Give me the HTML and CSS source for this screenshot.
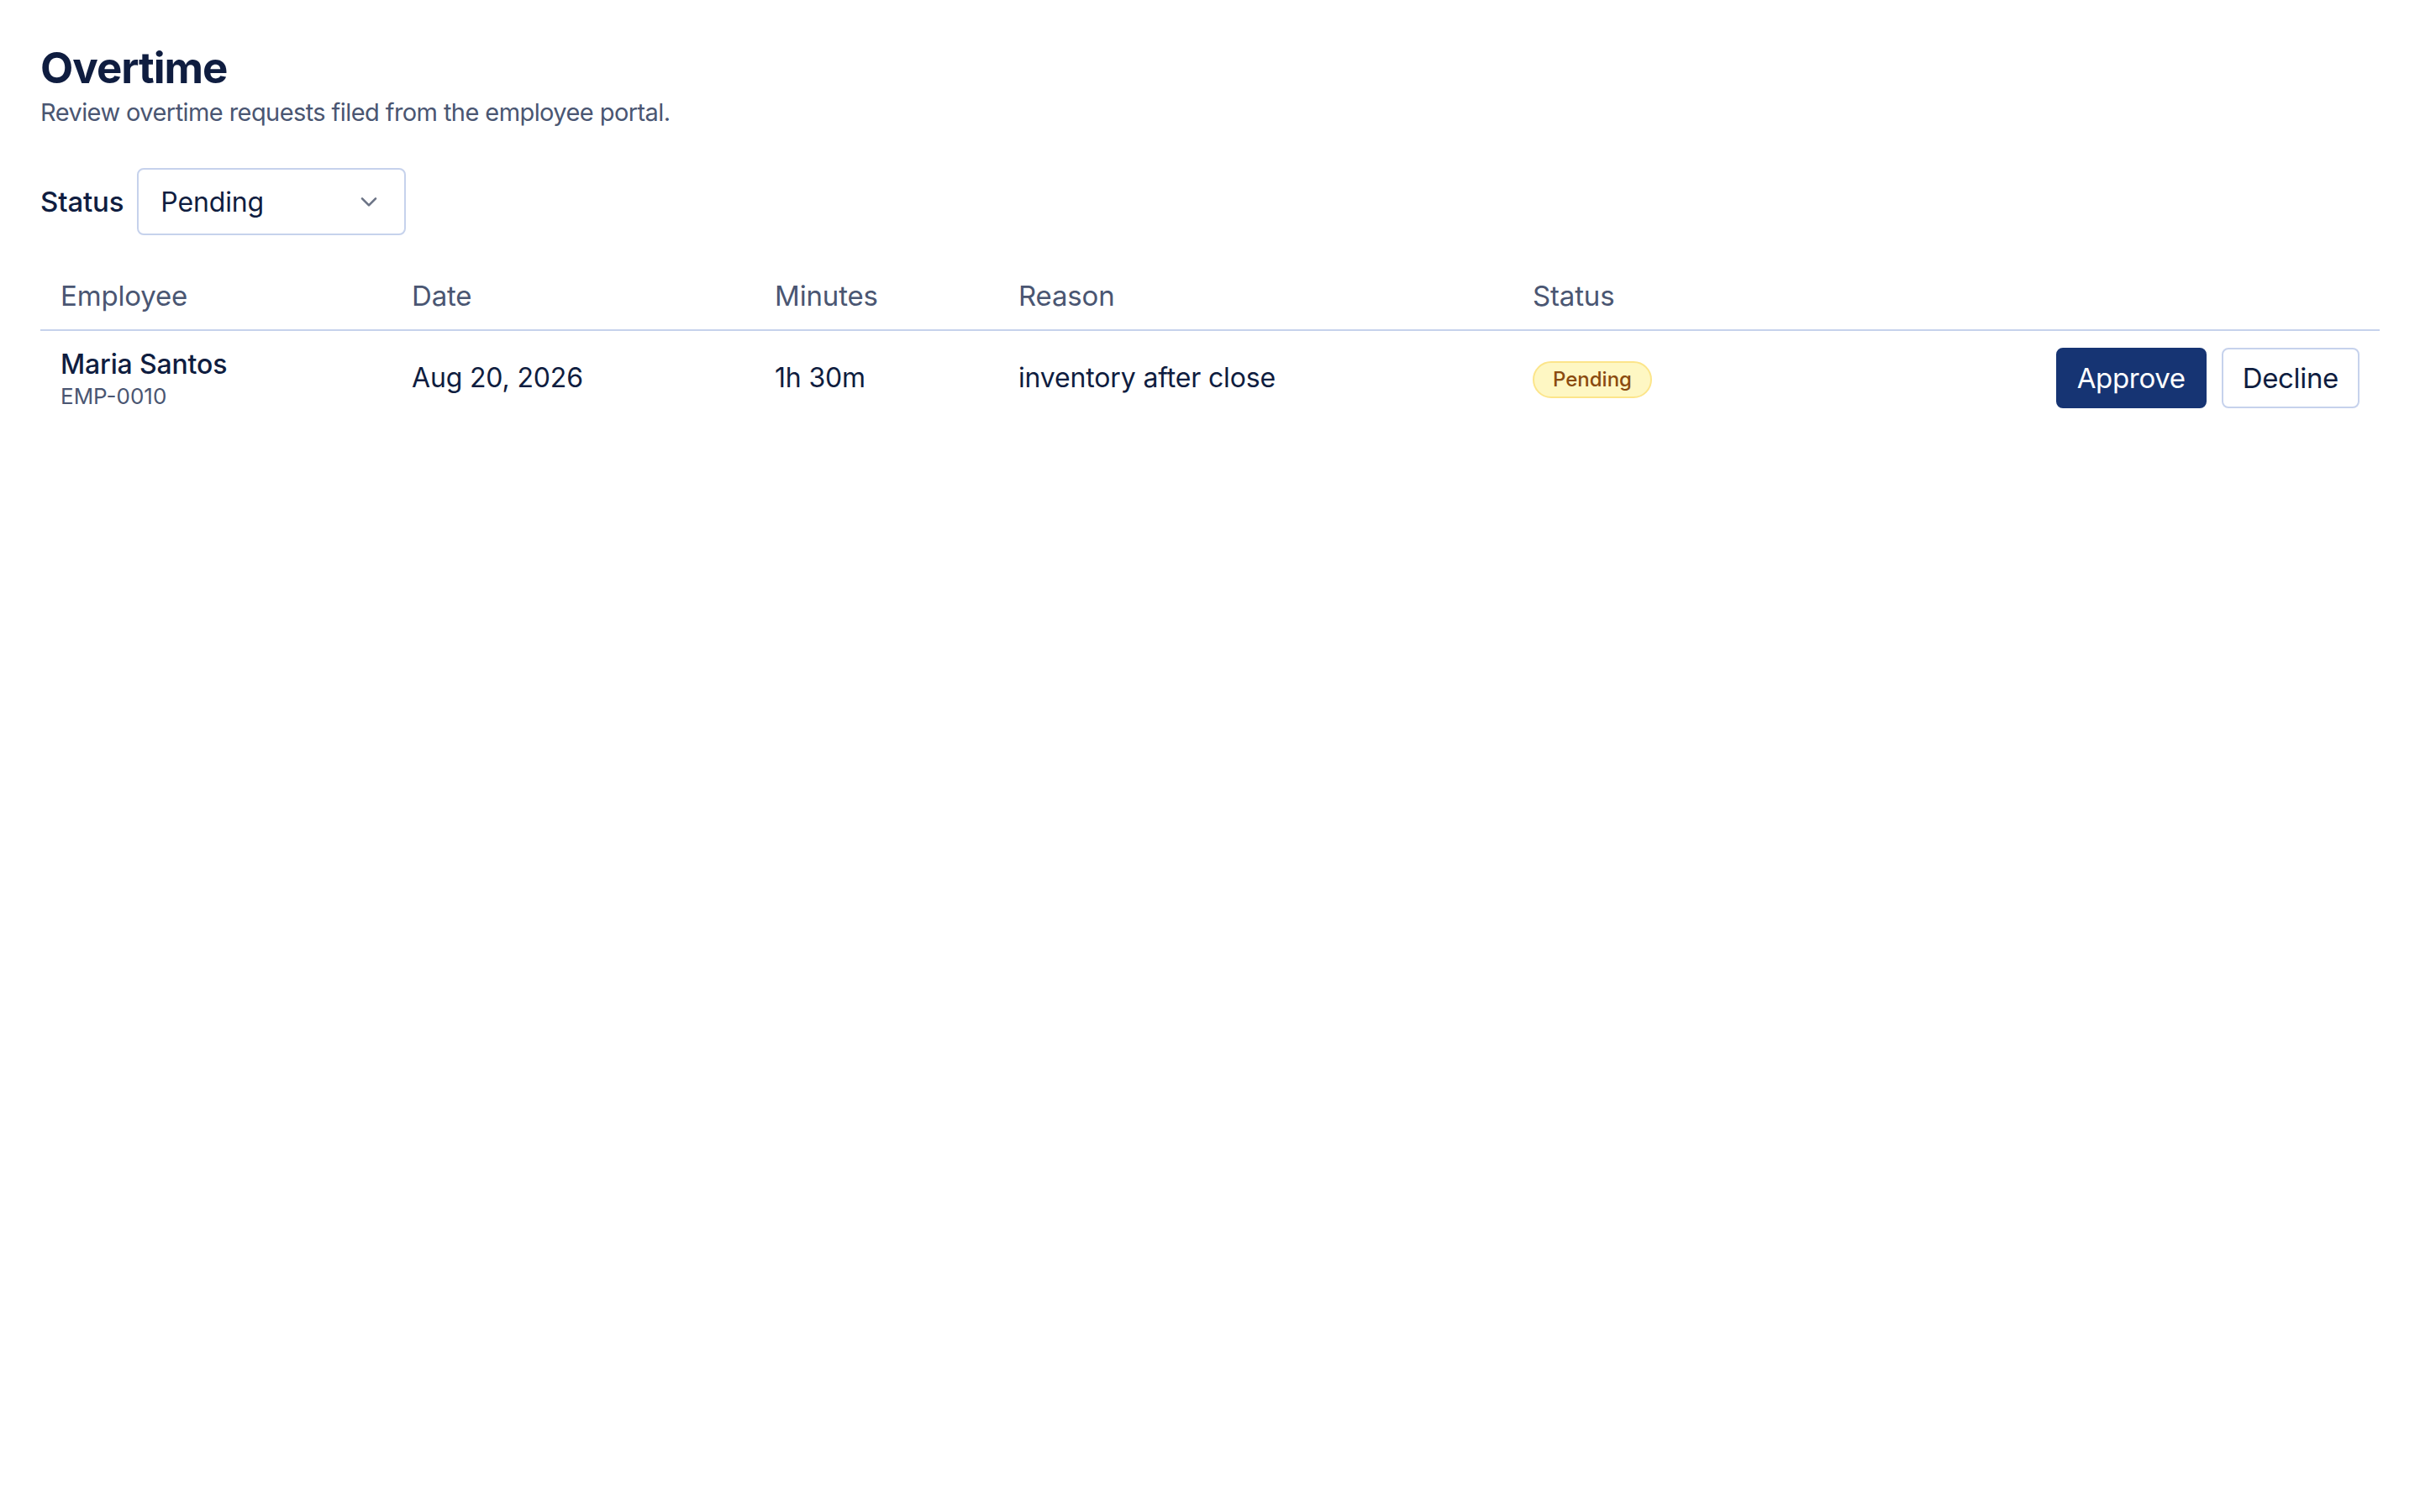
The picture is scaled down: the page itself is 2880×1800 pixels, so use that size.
FILE: index.html
```html
<!DOCTYPE html>
<html lang="en">
<head>
<meta charset="utf-8">
<title>Overtime</title>
<link rel="stylesheet" href="styles.css">
</head>
<body>
<main class="page">
  <header class="page-head">
    <h1 class="title">Overtime</h1>
    <p class="subtitle">Review overtime requests filed from the employee portal.</p>
  </header>

  <div class="filters">
    <label class="filter-label" for="status">Status</label>
    <div class="select" id="status">
      <span class="select-value">Pending</span>
      <svg class="chevron" viewBox="0 0 16 16" width="32" height="32" aria-hidden="true">
        <path d="M4 6.2 L8 10.2 L12 6.2" fill="none" stroke="currentColor" stroke-width="1.3" stroke-linecap="round" stroke-linejoin="round"/>
      </svg>
    </div>
  </div>

  <table class="table">
    <colgroup>
      <col class="col-emp">
      <col class="col-date">
      <col class="col-min">
      <col class="col-reason">
      <col class="col-status">
      <col class="col-actions">
    </colgroup>
    <thead>
      <tr>
        <th>Employee</th>
        <th>Date</th>
        <th>Minutes</th>
        <th>Reason</th>
        <th>Status</th>
        <th></th>
      </tr>
    </thead>
    <tbody>
      <tr>
        <td>
          <div class="emp-name">Maria Santos</div>
          <div class="emp-id">EMP-0010</div>
        </td>
        <td>Aug 20, 2026</td>
        <td>1h 30m</td>
        <td>inventory after close</td>
        <td><span class="badge">Pending</span></td>
        <td class="actions">
          <div class="action-group">
            <button class="btn btn-primary" type="button">Approve</button>
            <button class="btn btn-outline" type="button">Decline</button>
          </div>
        </td>
      </tr>
    </tbody>
  </table>
</main>
</body>
</html>
```

FILE: styles.css
```css
* { box-sizing: border-box; }

html, body {
  margin: 0;
  padding: 0;
  background: #ffffff;
}

body {
  font-family: Inter, "Noto Sans", "DejaVu Sans", sans-serif;
  color: #0f1d40;
  letter-spacing: -0.01em;
}

.page {
  padding: 48px;
}

.title {
  margin: 0;
  font-size: 51px;
  line-height: 66px;
  font-weight: 700;
  color: #0f1d40;
  letter-spacing: -0.02em;
}

.subtitle {
  margin: 0;
  font-size: 29px;
  line-height: 40px;
  color: #4a5672;
  letter-spacing: -0.02em;
}

.filters {
  display: flex;
  align-items: center;
  gap: 16px;
  margin-top: 46px;
}

.filter-label {
  font-size: 33px;
  font-weight: 500;
  color: #0f1d40;
}

.select {
  width: 320px;
  height: 80px;
  border: 2px solid #c6d2ec;
  border-radius: 8px;
  display: flex;
  align-items: center;
  justify-content: space-between;
  padding: 0 26px 0 26px;
  font-size: 32px;
  color: #0f1d40;
}

.chevron {
  color: #6b7385;
}

.table {
  width: 100%;
  margin-top: 32px;
  border-collapse: collapse;
  table-layout: fixed;
}

.col-emp { width: 418px; }
.col-date { width: 432px; }
.col-min { width: 290px; }
.col-reason { width: 612px; }
.col-status { width: 400px; }

.table th {
  text-align: left;
  font-weight: 400;
  font-size: 33px;
  line-height: 48px;
  color: #4a5672;
  padding: 16px 24px;
  border-bottom: 2px solid #c6d2ec;
}

.table td {
  padding: 18px 24px;
  font-size: 32px;
  line-height: 48px;
  color: #0f1d40;
  vertical-align: middle;
}

.emp-name {
  font-size: 32px;
  line-height: 40px;
  font-weight: 500;
  padding-top: 2px;
}

.emp-id {
  font-size: 26px;
  line-height: 32px;
  margin-top: 2px;
  color: #4a5672;
  letter-spacing: 0;
}

.badge {
  display: inline-block;
  padding: 2px 22px;
  font-size: 24px;
  line-height: 36px;
  font-weight: 500;
  color: #8a4b0f;
  background: #fef7c3;
  border: 2px solid #fce58a;
  border-radius: 999px;
  letter-spacing: 0;
  vertical-align: middle;
}

.actions {
  text-align: right;
}

.action-group {
  display: flex;
  justify-content: flex-end;
  gap: 18px;
}

.btn {
  height: 72px;
  padding: 0 23px;
  font-family: inherit;
  font-size: 33px;
  letter-spacing: -0.01em;
  border-radius: 8px;
  cursor: pointer;
}

.btn-primary {
  background: #163473;
  color: #ffffff;
  border: 2px solid #163473;
}

.btn-outline {
  background: #ffffff;
  color: #0f1d40;
  border: 2px solid #c6d2ec;
}
```
